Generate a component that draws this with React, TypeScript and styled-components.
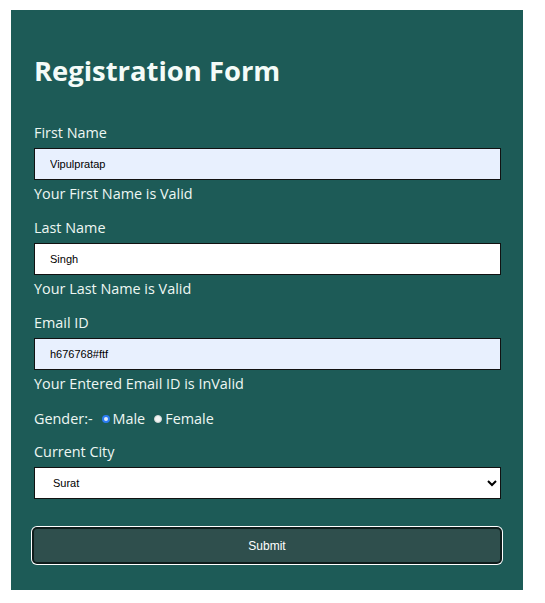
import React, { useState } from 'react';
import styled, { createGlobalStyle } from 'styled-components';

const GlobalStyle = createGlobalStyle`
  body {
    margin: 0;
    background: #ffffff;
    font-family: 'Open Sans', 'DejaVu Sans', sans-serif;
  }
`;

const FormPanel = styled.form`
  box-sizing: border-box;
  width: 512px;
  height: 580px;
  margin: 10px 0 0 11px;
  padding: 0 22px 0 23px;
  background-color: #1d5b57;
  color: #eef7f3;
  display: flex;
  flex-direction: column;
`;

const Title = styled.h1`
  margin: 41px 0 0 0;
  height: 40px;
  line-height: 40px;
  font-size: 27.4px;
  font-weight: 700;
  color: #f4fbf8;
`;

const Label = styled.label<{ $gap: number }>`
  display: block;
  margin-top: ${(p) => p.$gap}px;
  height: 20px;
  line-height: 20px;
  font-size: 14.4px;
  font-weight: 500;
`;

const TextInput = styled.input<{ $filled?: boolean }>`
  box-sizing: border-box;
  display: block;
  width: 467px;
  height: 32px;
  margin-top: 5px;
  padding: 0 0 0 15px;
  border: 1px solid #111;
  background-color: ${(p) => (p.$filled ? '#e8f0fe' : '#ffffff')};
  font-family: 'Liberation Sans', Arial, sans-serif;
  font-size: 11px;
  color: #000;
  outline: none;
`;

const Message = styled.div`
  margin-top: 4px;
  height: 20px;
  line-height: 20px;
  font-size: 14.4px;
  font-weight: 500;
`;

const GenderRow = styled.div`
  display: flex;
  align-items: center;
  margin-top: 14px;
  height: 20px;
  font-size: 14.4px;
  font-weight: 500;
`;

const GenderText = styled.span`
  margin-right: 9px;
`;

const RadioLabel = styled.label`
  display: inline-flex;
  align-items: center;
  margin-right: 9px;
`;

const Radio = styled.input`
  appearance: none;
  box-sizing: border-box;
  width: 8px;
  height: 8px;
  margin: 1px 3px 0 0;
  border-radius: 50%;
  background: #f4f4f4;
  border: 1px solid #cfd6d4;
  &:checked {
    border: 2px solid #2b7cf2;
    background: #dfe9f7;
  }
`;

const CitySelect = styled.select`
  box-sizing: border-box;
  display: block;
  width: 467px;
  height: 32px;
  margin-top: 5px;
  padding: 0 0 0 14px;
  border: 1px solid #111;
  border-radius: 0;
  background: #fff;
  font-family: 'Liberation Sans', Arial, sans-serif;
  font-size: 11px;
  color: #000;
  outline: none;
`;

const SubmitButton = styled.button`
  box-sizing: border-box;
  width: 470px;
  height: 37px;
  margin: 28px 0 0 -2px;
  border: 2px solid #0f1c1b;
  border-radius: 5px;
  box-shadow: 0 0 0 1px #ffffff;
  background-color: #2f4f4d;
  color: #ffffff;
  font-family: 'Liberation Sans', Arial, sans-serif;
  font-size: 12px;
  cursor: pointer;
`;

export default function App() {
  const [first, setFirst] = useState('Vipulpratap');
  const [last, setLast] = useState('Singh');
  const [email, setEmail] = useState('h676768#ftf');
  const [gender, setGender] = useState('male');
  const [city, setCity] = useState('Surat');

  const emailValid = /^[^@\s]+@[^@\s]+\.[^@\s]+$/.test(email);

  return (
    <>
      <GlobalStyle />
      <FormPanel onSubmit={(e) => e.preventDefault()}>
        <Title>Registration Form</Title>

        <Label $gap={32} htmlFor="fname">First Name</Label>
        <TextInput id="fname" $filled value={first} onChange={(e) => setFirst(e.target.value)} />
        <Message>Your First Name is {first ? 'Valid' : 'InValid'}</Message>

        <Label $gap={14} htmlFor="lname">Last Name</Label>
        <TextInput id="lname" value={last} onChange={(e) => setLast(e.target.value)} />
        <Message>Your Last Name is {last ? 'Valid' : 'InValid'}</Message>

        <Label $gap={14} htmlFor="email">Email ID</Label>
        <TextInput id="email" $filled value={email} onChange={(e) => setEmail(e.target.value)} />
        <Message>Your Entered Email ID is {emailValid ? 'Valid' : 'InValid'}</Message>

        <GenderRow>
          <GenderText>Gender:-</GenderText>
          <RadioLabel>
            <Radio type="radio" name="gender" checked={gender === 'male'} onChange={() => setGender('male')} />
            Male
          </RadioLabel>
          <RadioLabel>
            <Radio type="radio" name="gender" checked={gender === 'female'} onChange={() => setGender('female')} />
            Female
          </RadioLabel>
        </GenderRow>

        <Label $gap={14} htmlFor="city">Current City</Label>
        <CitySelect id="city" value={city} onChange={(e) => setCity(e.target.value)}>
          <option>Surat</option>
          <option>Ahmedabad</option>
          <option>Vadodara</option>
          <option>Rajkot</option>
        </CitySelect>

        <SubmitButton type="submit">Submit</SubmitButton>
      </FormPanel>
    </>
  );
}
